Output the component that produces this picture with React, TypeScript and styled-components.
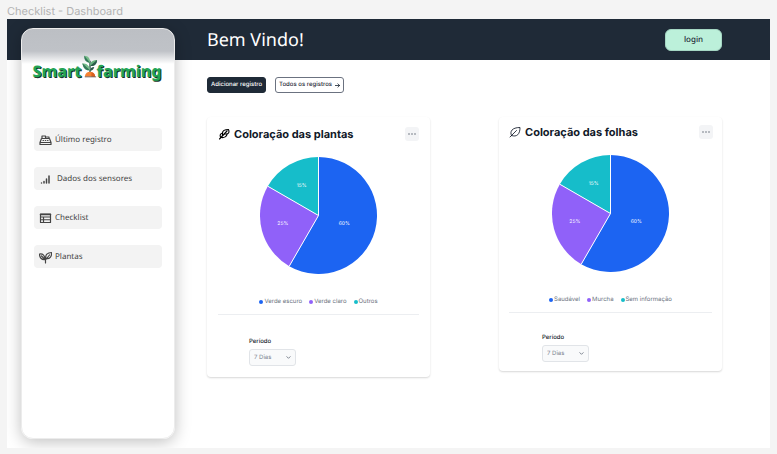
import React from "react";
import styled, { createGlobalStyle } from "styled-components";

const humanist = `"Noto Sans", "Open Sans", sans-serif`;

const GlobalStyle = createGlobalStyle`
  *, *::before, *::after { box-sizing: border-box; }
  body {
    margin: 0;
    background: #f4f4f4;
    font-family: Inter, sans-serif;
    color: #111928;
    text-rendering: geometricPrecision;
  }
  h1, h2, p, ul { margin: 0; padding: 0; }
  ul { list-style: none; }
  button, select { font-family: inherit; margin: 0; text-rendering: inherit; }
  button { cursor: pointer; }
`;

const Page = styled.div`
  display: flex;
  flex-direction: column;
  min-height: 100vh;
  padding: 4px 7px 6px;
`;

const FrameLabel = styled.p`
  font-size: 11px;
  line-height: 15px;
  color: #b3b3b3;
`;

const Frame = styled.div`
  flex: 1;
  display: grid;
  grid-template-columns: 168px 1fr;
  grid-template-rows: 41px 1fr;
  background: #fff;
  overflow: hidden;
`;

const Header = styled.header`
  grid-area: 1 / 1 / 2 / 3;
  display: flex;
  align-items: center;
  justify-content: space-between;
  padding: 0 48px 0 200px;
  background: #1f2a37;
`;

const Greeting = styled.h1`
  font: 400 18px/24px ${humanist};
  color: #fff;
`;

const LoginButton = styled.button`
  width: 57px;
  height: 22px;
  padding: 0;
  border: 1px solid #a5d6c3;
  border-radius: 6px;
  background: #bcf0da;
  color: #1f2a37;
  font: 500 8px/12px ${humanist};
`;

const Sidebar = styled.aside`
  grid-area: 1 / 1 / 3 / 2;
  z-index: 1;
  margin: 9px 0 9px 14px;
  padding: 25px 12px 0;
  border: 1px solid #ececec;
  border-radius: 12px;
  background: linear-gradient(#bcbfc4 0, #bfc2c7 22px, #fff 35px);
  box-shadow: 0 3px 16px rgba(0, 0, 0, 0.25);
`;

const Logo = styled.div`
  display: flex;
  align-items: flex-end;
  justify-content: center;
  height: 28px;
  margin: 0 -6px 0 -8px;
  font: 800 16px/22px ${humanist};
  color: #23a455;
  text-shadow: 1px 1px 0 #17322a;
  white-space: nowrap;
`;

const Sprout = styled.svg`
  flex: none;
  width: 16px;
  height: 23px;
  margin: 0 -1px 4px 0;
`;

const Menu = styled.ul`
  display: grid;
  gap: 16px;
  margin-top: 46px;
`;

const MenuLink = styled.a<{ $wide?: boolean }>`
  display: flex;
  align-items: center;
  gap: ${(p) => (p.$wide ? 5 : 3)}px;
  height: 23px;
  padding: 1px 5px 0;
  border-radius: 4px;
  background: #f3f3f3;
  color: #444;
  font: 400 8px/12px ${humanist};
  text-decoration: none;

  svg { width: 13px; height: 13px; flex: none; }
`;

const Main = styled.main`
  grid-area: 2 / 2 / 3 / 3;
  padding: 17px 48px 0 32px;
`;

const Actions = styled.div`
  display: flex;
  gap: 9px;
`;

const ActionButton = styled.button<{ $outline?: boolean }>`
  display: flex;
  align-items: center;
  gap: 3px;
  height: 16px;
  padding: 0 3px;
  border: 1px solid ${(p) => (p.$outline ? "#6b7280" : "#1f2a37")};
  border-radius: 3px;
  background: ${(p) => (p.$outline ? "#fff" : "#1f2a37")};
  color: ${(p) => (p.$outline ? "#1f2a37" : "#fff")};
  font-size: 6px;
  font-weight: 500;
  line-height: 8px;
  white-space: nowrap;

  svg { width: 5px; height: 5px; }
`;

const Cards = styled.div`
  display: grid;
  grid-template-columns: 1fr 1fr;
  align-items: start;
  gap: 69px;
  margin-top: 24px;
`;

const Card = styled.section<{ $compact?: boolean }>`
  padding: ${(p) => (p.$compact ? "8px 10px 9px" : "10px 11px 11px")};
  border-radius: 4px;
  background: #fff;
  box-shadow: 0 1px 2px rgba(0, 0, 0, 0.16);
`;

const CardHeader = styled.div`
  display: flex;
  align-items: center;
  gap: 4px;
  height: 14px;

  > svg { width: 12px; height: 12px; flex: none; }
`;

const CardTitle = styled.h2`
  flex: 1;
  font-size: 11px;
  line-height: 14px;
  font-weight: 700;
  white-space: nowrap;
`;

const MoreButton = styled.button<{ $compact?: boolean }>`
  display: grid;
  place-items: center;
  width: 14px;
  height: 14px;
  padding: 0;
  border: 0;
  border-radius: 3px;
  background: #f3f4f6;
  color: #4b5563;
  margin-right: ${(p) => (p.$compact ? -1 : 0)}px;

  svg { width: 8px; height: 8px; }
`;

const Chart = styled.svg`
  display: block;
  width: 117px;
  height: 117px;
  margin: 16px auto 0;
  font: 400 5px Inter, sans-serif;
`;

const Legend = styled.ul`
  display: flex;
  justify-content: center;
  gap: 7px;
  margin-top: 24px;
  padding-bottom: 8px;
  border-bottom: 1px solid #eceef1;
`;

const LegendItem = styled.li<{ $color: string }>`
  display: flex;
  align-items: center;
  gap: 1px;
  color: #6b7280;
  font-size: 6px;
  line-height: 8px;
  white-space: nowrap;

  &::before {
    content: "";
    width: 4px;
    height: 4px;
    border-radius: 50%;
    background: ${(p) => p.$color};
  }
`;

const Period = styled.div<{ $compact?: boolean }>`
  display: grid;
  justify-items: start;
  gap: 3px;
  margin: ${(p) => (p.$compact ? "21px 0 0 33px" : "23px 0 0 31px")};
`;

const PeriodLabel = styled.label`
  font-size: 6px;
  line-height: 8px;
  font-weight: 500;
`;

const SelectBox = styled.div`
  display: grid;
  align-items: center;

  > * { grid-area: 1 / 1; }
  svg { width: 5px; height: 5px; justify-self: end; margin-right: 5px; pointer-events: none; }
`;

const Select = styled.select`
  appearance: none;
  width: 47px;
  height: 17px;
  padding: 0 4px;
  border: 1px solid #e1e4e8;
  border-radius: 3px;
  background: #f9fafb;
  color: #7b828e;
  font-size: 6px;
  line-height: 8px;
`;

const stroke = {
  fill: "none",
  stroke: "currentColor",
  strokeLinecap: "round" as const,
  strokeLinejoin: "round" as const,
};

const RegisterIcon = () => (
  <svg viewBox="0 0 26 26" {...stroke} strokeWidth="2.400" aria-hidden="true">
    <path d="M5 9h16l3 8v4H2v-4zM2 17h22M6 9V4h7v5M15 6h5v3" />
    <path d="M8 13h1M12.500 13h1M17 13h1" />
  </svg>
);

const SignalIcon = () => (
  <svg viewBox="0 0 26 26" {...stroke} strokeWidth="3" aria-hidden="true">
    <path d="M5 20v.2M10 20v-3M15 20v-8M20 20V6" />
  </svg>
);

const TableIcon = () => (
  <svg viewBox="0 0 26 26" {...stroke} strokeWidth="2.400" aria-hidden="true">
    <path d="M3 4h20v17H3zM3 10h20M9 10v11M3 15.500h20" />
    <path d="M3 5h20" strokeWidth="3" />
  </svg>
);

const PlantIcon = () => (
  <svg viewBox="0 0 26 26" {...stroke} strokeWidth="2.400" aria-hidden="true">
    <path d="M13 24v-7M12 17C5 18 1 13 1 6c7-1 11 3 11 11zM5 10l8 8M14 15C12 8 17 3 25 3c1 8-4 14-11 12zM13 18l8-10" />
  </svg>
);

const FeatherIcon = () => (
  <svg viewBox="0 0 24 24" {...stroke} stroke="#000" strokeWidth="2.200" aria-hidden="true">
    <path d="M3 22L18 6M5 18c-2-4 0-7 4-8 0-4 4-7 12-7 2 4 1 8-3 9 0 5-6 8-11 7" />
    <path d="M9 10v5M18 12h-5" />
  </svg>
);

const LeafIcon = () => (
  <svg viewBox="0 0 24 24" {...stroke} stroke="#111928" strokeWidth="1.700" aria-hidden="true">
    <path d="M2 22L15 9M5 19C1 11 6 3 22 3c0 13-6 20-17 16z" />
  </svg>
);

const ArrowIcon = () => (
  <svg viewBox="0 0 12 12" {...stroke} strokeWidth="2" aria-hidden="true">
    <path d="M1 6h10M7 2l4 4-4 4" />
  </svg>
);

const ChevronIcon = () => (
  <svg viewBox="0 0 12 12" {...stroke} stroke="#6b7280" strokeWidth="2" aria-hidden="true">
    <path d="M2 4l4 4 4-4" />
  </svg>
);

const DotsIcon = () => (
  <svg viewBox="0 0 16 16" fill="currentColor" aria-hidden="true">
    <circle cx="2" cy="8" r="1.400" />
    <circle cx="8" cy="8" r="1.400" />
    <circle cx="14" cy="8" r="1.400" />
  </svg>
);

const SproutMark = () => (
  <Sprout viewBox="0 0 34 46" aria-hidden="true">
    <path d="M17 37V11" stroke="#31584c" strokeWidth="3" fill="none" />
    <path d="M17 15C8 14 5 8 5 0c8 0 13 6 12 15z" fill="#77bd8a" />
    <path d="M17 15L5 0c-1 8 3 14 12 15z" fill="#34795a" />
    <path d="M17 22c-1-8 5-13 15-13 0 8-6 14-15 13z" fill="#67b37c" />
    <path d="M17 22L32 9c0 8-6 14-15 13z" fill="#2b5b49" />
    <path d="M17 31C7 32 2 25 1 16c9 0 16 6 16 15z" fill="#77bd8a" />
    <path d="M17 31L1 16c1 9 6 16 16 15z" fill="#34795a" />
    <path d="M17 32c0-5 3-8 9-8-1 5-4 8-9 8z" fill="#2b5b49" />
    <path d="M6 44c1-7 6-10 11-10s10 3 11 10z" fill="#f58232" />
    <path d="M20 35c5 1 8 4 8 9h-8z" fill="#d95f1e" />
    <path d="M6 45h24" stroke="#47332a" strokeWidth="1.500" />
  </Sprout>
);

const menu = [
  { label: "Último registro", Icon: RegisterIcon },
  { label: "Dados dos sensores", Icon: SignalIcon, wide: true },
  { label: "Checklist", Icon: TableIcon },
  { label: "Plantas", Icon: PlantIcon },
];

const colors = ["#1c64f2", "#9061f9", "#16bdca"];

const slices = [
  { from: 0, to: 210, label: "60%", x: 85, y: 69 },
  { from: 210, to: 300, label: "25%", x: 23, y: 69 },
  { from: 300, to: 360, label: "15%", x: 42, y: 30 },
];

const point = (angle: number) => {
  const a = ((angle - 90) * Math.PI) / 180;
  return `${59 + 59 * Math.cos(a)} ${59 + 59 * Math.sin(a)}`;
};

const Pie = ({ title }: { title: string }) => (
  <Chart viewBox="0 0 118 118" role="img" aria-label={title}>
    {slices.map((s, i) => (
      <path
        key={s.label}
        d={`M59 59L${point(s.from)}A59 59 0 ${s.to - s.from > 180 ? 1 : 0} 1 ${point(s.to)}Z`}
        fill={colors[i]}
      />
    ))}
    {slices.map((s) => (
      <path key={s.from} d={`M59 59L${point(s.from)}`} stroke="#fff" />
    ))}
    {slices.map((s) => (
      <text key={s.label} x={s.x} y={s.y} fill="#fff" textAnchor="middle">
        {s.label}
      </text>
    ))}
  </Chart>
);

interface ChartCardProps {
  id: string;
  title: string;
  icon: React.ReactNode;
  legend: string[];
  compact?: boolean;
}

const ChartCard = ({ id, title, icon, legend, compact }: ChartCardProps) => (
  <Card $compact={compact}>
    <CardHeader>
      {icon}
      <CardTitle>{title}</CardTitle>
      <MoreButton $compact={compact} aria-label="Mais opções">
        <DotsIcon />
      </MoreButton>
    </CardHeader>
    <Pie title={title} />
    <Legend>
      {legend.map((name, i) => (
        <LegendItem key={name} $color={colors[i]}>
          {name}
        </LegendItem>
      ))}
    </Legend>
    <Period $compact={compact}>
      <PeriodLabel htmlFor={id}>Período</PeriodLabel>
      <SelectBox>
        <Select id={id}>
          <option>7 Dias</option>
        </Select>
        <ChevronIcon />
      </SelectBox>
    </Period>
  </Card>
);

export default function App() {
  return (
    <>
      <GlobalStyle />
      <Page>
        <FrameLabel>Checklist - Dashboard</FrameLabel>
        <Frame>
          <Header>
            <Greeting>Bem Vindo!</Greeting>
            <LoginButton>login</LoginButton>
          </Header>
          <Sidebar>
            <Logo>
              <span>Smart</span>
              <SproutMark />
              <span>farming</span>
            </Logo>
            <nav>
              <Menu>
                {menu.map(({ label, Icon, wide }) => (
                  <li key={label}>
                    <MenuLink href="#" $wide={wide}>
                      <Icon />
                      {label}
                    </MenuLink>
                  </li>
                ))}
              </Menu>
            </nav>
          </Sidebar>
          <Main>
            <Actions>
              <ActionButton>Adicionar registro</ActionButton>
              <ActionButton $outline>
                Todos os registros
                <ArrowIcon />
              </ActionButton>
            </Actions>
            <Cards>
              <ChartCard
                id="periodo-plantas"
                title="Coloração das plantas"
                icon={<FeatherIcon />}
                legend={["Verde escuro", "Verde claro", "Outros"]}
              />
              <ChartCard
                id="periodo-folhas"
                title="Coloração das folhas"
                icon={<LeafIcon />}
                legend={["Saudável", "Murcha", "Sem informação"]}
                compact
              />
            </Cards>
          </Main>
        </Frame>
      </Page>
    </>
  );
}
